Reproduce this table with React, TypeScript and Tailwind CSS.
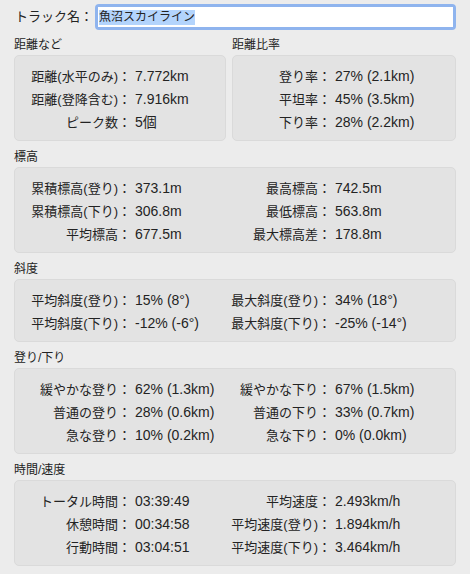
import React from "react";

type Row = [string, string, string?, string?];

const font = "font-[Liberation_Sans,Noto_Sans_CJK_JP,sans-serif]";

const elevation: Row[] = [
  ["累積標高(登り)：", "373.1m", "最高標高：", "742.5m"],
  ["累積標高(下り)：", "306.8m", "最低標高：", "563.8m"],
  ["平均標高：", "677.5m", "最大標高差：", "178.8m"],
];

const slope: Row[] = [
  ["平均斜度(登り)：", "15% (8°)", "最大斜度(登り)：", "34% (18°)"],
  ["平均斜度(下り)：", "-12% (-6°)", "最大斜度(下り)：", "-25% (-14°)"],
];

const upDown: Row[] = [
  ["緩やかな登り：", "62% (1.3km)", "緩やかな下り：", "67% (1.5km)"],
  ["普通の登り：", "28% (0.6km)", "普通の下り：", "33% (0.7km)"],
  ["急な登り：", "10% (0.2km)", "急な下り：", "0% (0.0km)"],
];

const timeSpeed: Row[] = [
  ["トータル時間：", "03:39:49", "平均速度：", "2.493km/h"],
  ["休憩時間：", "00:34:58", "平均速度(登り)：", "1.894km/h"],
  ["行動時間：", "03:04:51", "平均速度(下り)：", "3.464km/h"],
];

function Box({ children }: { children: React.ReactNode }) {
  return (
    <div className="rounded-[5px] border border-[#dadada] bg-[#e3e3e3] pt-[9px] pb-[6px]">{children}</div>
  );
}

function Section({ title, children, first }: { title: string; children: React.ReactNode; first?: boolean }) {
  return (
    <div className={first ? "mt-[8px]" : "mt-[9px]"}>
      <div className="mb-[3px] text-[12px] leading-[14px]">{title}</div>
      {children}
    </div>
  );
}

function Line({ label, value, labelW }: { label: string; value: string; labelW: string }) {
  return (
    <div className="flex h-[23px] items-center text-[13px] leading-[23px]">
      <span className={`${labelW} shrink-0 whitespace-nowrap text-right`}>{label}</span>
      <span className="whitespace-nowrap pl-[4px] text-[14px]">{value}</span>
    </div>
  );
}

function WideBox({ rows }: { rows: Row[] }) {
  return (
    <Box>
      {rows.map((r, i) => (
        <div key={i} className="flex h-[23px] items-center text-[13px] leading-[23px]">
          <span className="w-[116px] shrink-0 whitespace-nowrap text-right">{r[0]}</span>
          <span className="w-[84px] shrink-0 whitespace-nowrap pl-[4px] text-[14px]">{r[1]}</span>
          <span className="w-[116px] shrink-0 whitespace-nowrap text-right">{r[2]}</span>
          <span className="whitespace-nowrap pl-[4px] text-[14px]">{r[3]}</span>
        </div>
      ))}
    </Box>
  );
}

export default function App() {
  return (
    <div className={`${font} h-[574px] w-[470px] overflow-hidden bg-[#ececec] px-[14px] pt-[4px] text-[#232323]`}>
      <div className="flex h-[26px] items-center">
        <span className="w-[81px] shrink-0 pl-[1px] text-[13px] leading-[26px]">トラック名：</span>
        <div className="flex h-[26px] flex-1 rounded-[4px] bg-[#8fb4ee] p-[3px]">
          <div className="flex flex-1 items-center bg-white pl-[1px]">
            <span className="bg-[#b3d4fc] text-[12px] leading-[15px]">魚沼スカイライン</span>
          </div>
        </div>
      </div>

      <div className="grid grid-cols-[212px_1fr] gap-x-[6px]">
        <Section title="距離など" first>
          <Box>
            <Line labelW="w-[116px]" label="距離(水平のみ)：" value="7.772km" />
            <Line labelW="w-[116px]" label="距離(登降含む)：" value="7.916km" />
            <Line labelW="w-[116px]" label="ピーク数：" value="5個" />
          </Box>
        </Section>
        <Section title="距離比率" first>
          <Box>
            <Line labelW="w-[98px]" label="登り率：" value="27% (2.1km)" />
            <Line labelW="w-[98px]" label="平坦率：" value="45% (3.5km)" />
            <Line labelW="w-[98px]" label="下り率：" value="28% (2.2km)" />
          </Box>
        </Section>
      </div>

      <Section title="標高">
        <WideBox rows={elevation} />
      </Section>
      <Section title="斜度">
        <WideBox rows={slope} />
      </Section>
      <Section title="登り/下り">
        <WideBox rows={upDown} />
      </Section>
      <Section title="時間/速度">
        <WideBox rows={timeSpeed} />
      </Section>
    </div>
  );
}
